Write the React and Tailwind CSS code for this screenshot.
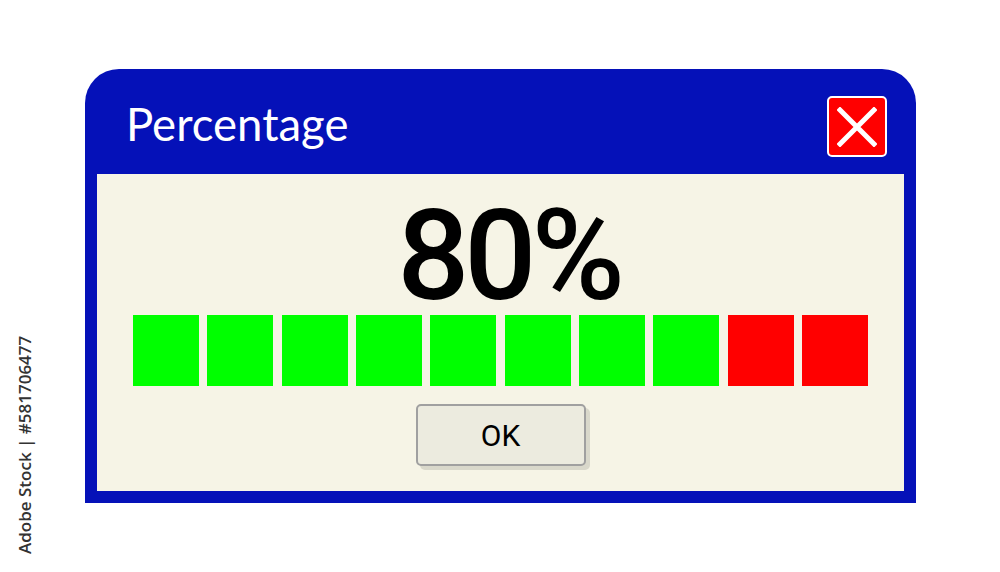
import React from 'react';

const blocks = [1, 1, 1, 1, 1, 1, 1, 1, 0, 0];

function CloseButton() {
  return (
    <button className="w-[60px] h-[61px] rounded-[5px] border-2 border-white bg-[#ff0000] flex items-center justify-center">
      <svg width="40" height="40" viewBox="0 0 40 40">
        <path d="M3 3 L37 37 M37 3 L3 37" stroke="#ffffff" strokeWidth="5" strokeLinecap="square" />
      </svg>
    </button>
  );
}

export default function App() {
  return (
    <div className="relative w-[1000px] h-[572px] bg-white overflow-hidden">
      {/* side credit line */}
      <div className="absolute left-[12px] top-[335px] h-[220px] flex items-center justify-center [writing-mode:vertical-rl] rotate-180 text-[17px] font-semibold text-[#333333] font-['Open_Sans',sans-serif] whitespace-nowrap">
        Adobe Stock | #581706477
      </div>

      <div className="ml-[85px] pt-[69px] w-[831px]">
        <div className="bg-[#0511b8] rounded-t-[34px] px-3 pb-3">
          {/* Title bar */}
          <div className="h-[105px] flex items-start justify-between pl-[29px] pr-[17px] pt-[27px]">
            <h1 className="mt-[5px] text-white text-[45.5px] leading-[45px] font-['Lato',sans-serif]">
              Percentage
            </h1>
            <CloseButton />
          </div>

          {/* Body */}
          <div className="h-[317px] bg-[#f6f4e6] flex flex-col items-center pt-[32px]">
            <div className="h-[100px] leading-[100px] text-[127px] font-medium text-black font-['Roboto',sans-serif] tracking-[-0.04em] pl-[16px]">
              80%
            </div>
            <div className="mt-[9px] self-stretch mx-[36px] flex gap-[8.4px]">
              {blocks.map((on, i) => (
                <div key={i} className={on ? 'flex-1 h-[71px] bg-[#00ff00]' : 'flex-1 h-[71px] bg-[#ff0000]'} />
              ))}
            </div>
            <button className="mt-[18px] w-[170px] h-[62px] rounded-[5px] border-2 border-[#a0a0a0] bg-[#ecebdf] shadow-[4px_4px_0_#d9d8cb] text-[30px] text-black font-['Roboto',sans-serif] flex items-center justify-center">
              OK
            </button>
          </div>
        </div>
      </div>
    </div>
  );
}
